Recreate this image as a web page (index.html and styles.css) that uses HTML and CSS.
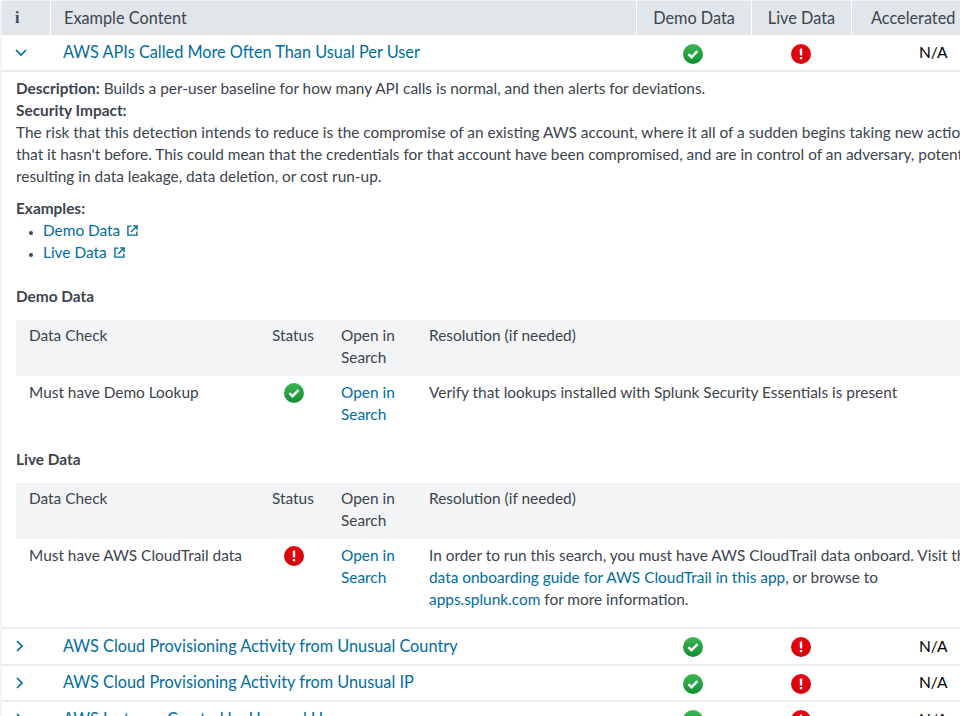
FILE: index.html
```html
<!DOCTYPE html>
<html>
<head>
    <link rel="stylesheet" href="styles.css">
</head>
<body>
    <svg class="defs" width="0" height="0">
        <defs>
            <linearGradient id="greenFill" x1="0" y1="0" x2="0" y2="1">
                <stop offset="0" stop-color="#3cb655"/>
                <stop offset="1" stop-color="#0f8f33"/>
            </linearGradient>
            <linearGradient id="redFill" x1="0" y1="0" x2="0" y2="1">
                <stop offset="0" stop-color="#e8060f"/>
                <stop offset="1" stop-color="#d30009"/>
            </linearGradient>
            <symbol id="okIcon" viewBox="0 0 20 20">
                <circle cx="10" cy="10" r="10" fill="url(#greenFill)"/>
                <path d="M5.4 10.2l3.1 3 6-6" fill="none" stroke="#fff" stroke-width="2.4"/>
            </symbol>
            <symbol id="errIcon" viewBox="0 0 20 20">
                <circle cx="10" cy="10" r="10" fill="url(#redFill)"/>
                <rect x="8.8" y="4.6" width="2.4" height="7" rx="0.6" fill="#fff"/>
                <rect x="8.8" y="12.9" width="2.4" height="2.4" rx="0.4" fill="#fff"/>
            </symbol>
            <symbol id="extIcon" viewBox="0 0 12 12">
                <path d="M5 1.2H1v9.8h9.8V7" fill="none" stroke="currentColor" stroke-width="1.5"/>
                <path d="M4.4 7.6L10.6 1.4M6.6 1h4.4v4.4" fill="none" stroke="currentColor" stroke-width="1.5"/>
            </symbol>
        </defs>
    </svg>

    <div id="page">
        <div class="row head">
            <div class="cell c-info"><b class="info">i</b></div>
            <div class="cell c-name">Example Content</div>
            <div class="cell c-demo">Demo Data</div>
            <div class="cell c-live">Live Data</div>
            <div class="cell c-accel">Accelerated Data</div>
        </div>

        <div class="row item open">
            <div class="c-info"><svg class="chev" viewBox="0 0 12 8"><path d="M1 1l5 5 5-5"/></svg></div>
            <a class="c-name title">AWS APIs Called More Often Than Usual Per User</a>
            <div class="c-demo"><svg class="stat"><use href="#okIcon"/></svg></div>
            <div class="c-live"><svg class="stat"><use href="#errIcon"/></svg></div>
            <div class="c-accel">N/A</div>
        </div>

        <div class="detail">
            <p class="line"><b>Description:</b> Builds a per-user baseline for how many API calls is normal, and then alerts for deviations.</p>
            <p class="line"><b>Security Impact:</b></p>
            <p class="line">The risk that this detection intends to reduce is the compromise of an existing AWS account, where it all of a sudden begins taking new actions</p>
            <p class="line">that it hasn't before. This could mean that the credentials for that account have been compromised, and are in control of an adversary, potentially</p>
            <p class="line">resulting in data leakage, data deletion, or cost run-up.</p>

            <p class="line examples"><b>Examples:</b></p>
            <ul class="links">
                <li><a>Demo Data<svg class="ext"><use href="#extIcon"/></svg></a></li>
                <li><a>Live Data<svg class="ext"><use href="#extIcon"/></svg></a></li>
            </ul>

            <h4>Demo Data</h4>
            <table class="checks">
                <tr class="th">
                    <td class="t-check">Data Check</td>
                    <td class="t-status">Status</td>
                    <td class="t-open">Open in Search</td>
                    <td>Resolution (if needed)</td>
                </tr>
                <tr>
                    <td>Must have Demo Lookup</td>
                    <td class="t-status"><svg class="stat"><use href="#okIcon"/></svg></td>
                    <td><a>Open in Search</a></td>
                    <td>Verify that lookups installed with Splunk Security Essentials is present</td>
                </tr>
            </table>

            <h4>Live Data</h4>
            <table class="checks last">
                <tr class="th">
                    <td class="t-check">Data Check</td>
                    <td class="t-status">Status</td>
                    <td class="t-open">Open in Search</td>
                    <td>Resolution (if needed)</td>
                </tr>
                <tr>
                    <td>Must have AWS CloudTrail data</td>
                    <td class="t-status"><svg class="stat"><use href="#errIcon"/></svg></td>
                    <td><a>Open in Search</a></td>
                    <td>
                        <div>In order to run this search, you must have AWS CloudTrail data onboard. Visit the</div>
                        <div><a>data onboarding guide for AWS CloudTrail in this app</a>, or browse to</div>
                        <div><a>apps.splunk.com</a> for more information.</div>
                    </td>
                </tr>
            </table>
        </div>

        <div class="row item">
            <div class="c-info"><svg class="chev side" viewBox="0 0 8 12"><path d="M1 1l5 5-5 5"/></svg></div>
            <a class="c-name title">AWS Cloud Provisioning Activity from Unusual Country</a>
            <div class="c-demo"><svg class="stat"><use href="#okIcon"/></svg></div>
            <div class="c-live"><svg class="stat"><use href="#errIcon"/></svg></div>
            <div class="c-accel">N/A</div>
        </div>
        <div class="row item">
            <div class="c-info"><svg class="chev side" viewBox="0 0 8 12"><path d="M1 1l5 5-5 5"/></svg></div>
            <a class="c-name title">AWS Cloud Provisioning Activity from Unusual IP</a>
            <div class="c-demo"><svg class="stat"><use href="#okIcon"/></svg></div>
            <div class="c-live"><svg class="stat"><use href="#errIcon"/></svg></div>
            <div class="c-accel">N/A</div>
        </div>
        <div class="row item">
            <div class="c-info"><svg class="chev side" viewBox="0 0 8 12"><path d="M1 1l5 5-5 5"/></svg></div>
            <a class="c-name title">AWS Instance Created by Unusual User</a>
            <div class="c-demo"><svg class="stat"><use href="#okIcon"/></svg></div>
            <div class="c-live"><svg class="stat"><use href="#errIcon"/></svg></div>
            <div class="c-accel">N/A</div>
        </div>
    </div>
</body>
</html>
```

FILE: styles.css
```css
html, body {
    margin: 0;
    height: 716px;
    overflow: hidden;
    background: #fff;
}
body {
    font-family: "Lato", "Liberation Sans", sans-serif;
    font-size: 15.4px;
    line-height: 22px;
    color: #3c444d;
}
a {
    color: #006d9c;
}
b, h4 {
    font-weight: 700;
}
.defs {
    display: block;
    height: 0;
}
#page {
    width: 1100px;
    padding-top: 1px;
    padding-left: 2px;
    background: #f2f4f5;
}

/* outer table rows */
.row {
    display: grid;
    grid-template-columns: 49px 586px 115px 100px 248px;
    background: #fff;
}
.head {
    height: 34px;
    background: #fff;
}
.cell {
    background: #e1e6eb;
    margin-right: 1px;
    display: flex;
    align-items: center;
    font-size: 16.3px;
    padding-bottom: 1px;
}
.c-name.cell {
    padding-left: 13px;
}
.head .c-demo, .head .c-live {
    justify-content: center;
}
.head .c-accel {
    padding-left: 19px;
}
.c-info.cell {
    padding-left: 13px;
}
.info {
    font-family: "Liberation Serif", serif;
    font-size: 16px;
    font-weight: 700;
}
.item {
    height: 34.5px;
    align-items: center;
    border-bottom: 2px solid #e9edf0;
}
.item .c-info {
    padding-left: 14px;
    display: flex;
}
.item .c-name {
    padding-left: 12px;
    padding-bottom: 1px;
}
.item .c-demo {
    display: flex;
    justify-content: center;
    padding-top: 2px;
    padding-right: 3px;
}
.item .c-live {
    display: flex;
    justify-content: center;
    padding-top: 2px;
    padding-right: 2px;
}
.item .c-accel {
    color: #000;
    font-size: 15.5px;
    padding-left: 67px;
    padding-bottom: 1px;
}
.item.open {
    height: 35px;
    border-bottom-color: #e6ebee;
}
.title {
    font-size: 16.3px;
}
.chev {
    width: 12px;
    height: 8px;
    margin-left: -1px;
    fill: none;
    stroke: #006d9c;
    stroke-width: 1.7;
}
.chev.side {
    width: 8px;
    height: 12px;
    margin-left: 0;
}
.stat {
    width: 20px;
    height: 20px;
    display: block;
}

/* expanded detail */
.detail {
    background: #fff;
    padding: 5px 0 0 14px;
    border-bottom: 2px solid #e9edf0;
}
.line {
    margin: 0;
    white-space: nowrap;
}
.examples {
    margin-top: 10px;
}
.links {
    margin: 0 0 22px;
    padding-left: 27px;
}
.links li {
    height: 22px;
}
.links li::marker {
    font-size: 11px;
}
.ext {
    width: 11px;
    height: 11px;
    margin-left: 7px;
    color: #006d9c;
}
h4 {
    margin: 0 0 13px;
    font-size: 15.4px;
    line-height: 22px;
}
.checks {
    border-collapse: collapse;
    width: 1000px;
    margin-bottom: 16px;
    table-layout: fixed;
}
.checks.last {
    margin-bottom: 10px;
}
.checks td {
    vertical-align: top;
    padding: 4px 13px 8px;
    white-space: normal;
}
.checks tr:last-child td {
    padding-top: 5px;
    padding-bottom: 7px;
}
.checks .th td {
    background: #f2f4f5;
}
.t-check {
    width: 217px;
}
.t-status {
    width: 43px;
}
.t-open {
    width: 62px;
}
.checks td .stat {
    margin: 2px auto 0;
}
.checks td div {
    white-space: nowrap;
}
```
